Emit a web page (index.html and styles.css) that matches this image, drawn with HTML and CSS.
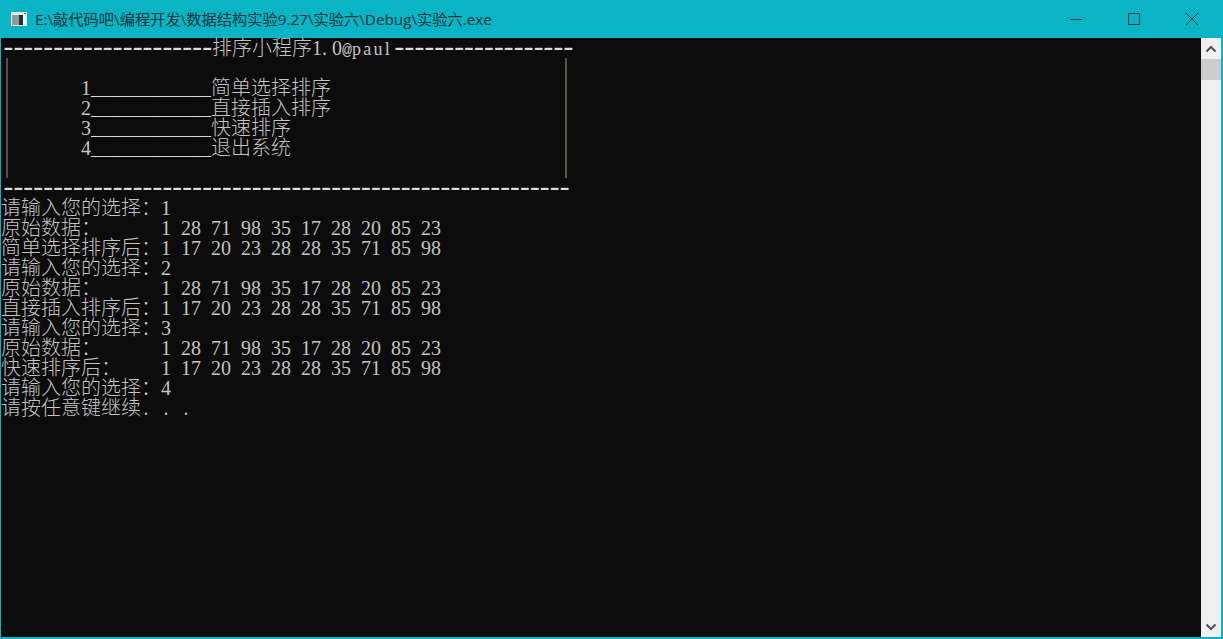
FILE: index.html
```html
<!DOCTYPE html>
<html lang="zh-CN">
<head>
<meta charset="utf-8">
<title>实验六</title>
<link rel="stylesheet" href="styles.css">
</head>
<body>
<div class="window">
  <header class="titlebar">
    <svg class="app-icon" width="16" height="14" viewBox="0 0 16 14">
      <rect x="0" y="0" width="16" height="14" fill="#e8eef0"/>
      <rect x="1" y="3" width="14" height="10" fill="#20343a"/>
      <rect x="1" y="3" width="7" height="10" fill="#8c9a9c"/>
      <rect x="12" y="3" width="3" height="10" fill="#f0f4f4"/>
      <rect x="13" y="1" width="2" height="1" fill="#a05050"/>
    </svg>
    <span class="title-text">E:\敲代码吧\编程开发\数据结构实验9.27\实验六\Debug\实验六.exe</span>
    <div class="controls">
      <span class="control"><svg width="14" height="14" viewBox="0 0 14 14"><path d="M1 7.5H13" stroke="#0a3c48" fill="none"/></svg></span>
      <span class="control"><svg width="14" height="14" viewBox="0 0 14 14"><rect x="1.5" y="1.5" width="11" height="11" stroke="#0a3c48" fill="none"/></svg></span>
      <span class="control"><svg width="14" height="14" viewBox="0 0 14 14"><path d="M1 1L13 13M13 1L1 13" stroke="#0a3c48" fill="none"/></svg></span>
    </div>
  </header>
  <div class="client">
    <main class="console">
      <div class="line"><span class="d">---------------------</span>排序小程序1<span class="dot">.</span>0<span class="m">@</span><span class="paul">paul</span><span class="d">------------------</span></div>
      <div class="panel">
        <div class="line"></div>
        <div class="line indent">1<span class="m u">____________</span>简单选择排序</div>
        <div class="line indent">2<span class="m u">____________</span>直接插入排序</div>
        <div class="line indent">3<span class="m u">____________</span>快速排序</div>
        <div class="line indent">4<span class="m u">____________</span>退出系统</div>
        <div class="line"></div>
      </div>
      <div class="line"><span class="d">---------------------------------------------------------</span></div>
      <div class="line">请输入您的选择：1</div>
      <div class="line">原始数据：<span class="m">      </span>1 28 71 98 35 17 28 20 85 23</div>
      <div class="line">简单选择排序后：1 17 20 23 28 28 35 71 85 98</div>
      <div class="line">请输入您的选择：2</div>
      <div class="line">原始数据：<span class="m">      </span>1 28 71 98 35 17 28 20 85 23</div>
      <div class="line">直接插入排序后：1 17 20 23 28 28 35 71 85 98</div>
      <div class="line">请输入您的选择：3</div>
      <div class="line">原始数据：<span class="m">      </span>1 28 71 98 35 17 28 20 85 23</div>
      <div class="line">快速排序后：<span class="m">    </span>1 17 20 23 28 28 35 71 85 98</div>
      <div class="line">请输入您的选择：4</div>
      <div class="line">请按任意键继续<span class="m">. . .</span></div>
    </main>
    <aside class="scrollbar">
      <span class="arrow"><svg width="12" height="8" viewBox="0 0 12 8"><path d="M1.5 6.5L6 2L10.5 6.5" stroke="#505050" stroke-width="2" fill="none"/></svg></span>
      <span class="thumb"></span>
      <span class="track"></span>
      <span class="arrow"><svg width="12" height="8" viewBox="0 0 12 8"><path d="M1.5 1.5L6 6L10.5 1.5" stroke="#505050" stroke-width="2" fill="none"/></svg></span>
    </aside>
  </div>
</div>
</body>
</html>
```
FILE: styles.css
```css
* { box-sizing: border-box; }
html, body { margin: 0; height: 100%; overflow: hidden; }
.window {
  width: 1223px;
  height: 639px;
  display: flex;
  flex-direction: column;
  background: #0ab4c4;
  padding: 0 2px 2px 1px;
}
.titlebar {
  height: 38px;
  flex: none;
  display: flex;
  align-items: center;
  padding-left: 10px;
}
.app-icon { flex: none; margin-top: -1px; }
.title-text {
  margin-left: 8px;
  font: 15.25px/20px "Open Sans", "Noto Sans CJK SC", sans-serif;
  color: #07343f;
  white-space: pre;
}
.controls { margin-left: auto; display: flex; }
.control {
  width: 58px;
  height: 38px;
  display: flex;
  align-items: center;
  justify-content: center;
}
.client { flex: 1; display: flex; min-height: 0; }
.console {
  flex: 1;
  background: #0c0c0c;
  color: #c4c4c4;
  font: 300 20px/20px "Liberation Serif", "Noto Sans CJK SC", serif;
  word-spacing: 5px;
}
.line { height: 20px; white-space: pre; }
.m { font-family: "Liberation Mono", monospace; font-size: 16.667px; word-spacing: 0; }
.u { color: #dcdcdc; }
.d {
  font-family: "Liberation Mono", monospace;
  font-size: 28px;
  letter-spacing: -6.87px;
  line-height: 0;
  vertical-align: -1px;
  margin: 0 3.5px 0 -1px;
  color: #dcdcdc;
}
.dot { letter-spacing: 5px; }
.paul { font-size: 18px; letter-spacing: 2.25px; }
.panel {
  width: 561px;
  margin-left: 5px;
  border-left: 2px solid #5e4a4c;
  border-right: 2px solid #5c5248;
}
.indent { padding-left: 73px; }
.scrollbar {
  width: 20px;
  flex: none;
  background: #f0f0f0;
  display: flex;
  flex-direction: column;
}
.arrow {
  height: 21px;
  flex: none;
  display: flex;
  align-items: center;
  justify-content: center;
}
.thumb { height: 21px; flex: none; background: #cdcdcd; }
.track { flex: 1; }
```
